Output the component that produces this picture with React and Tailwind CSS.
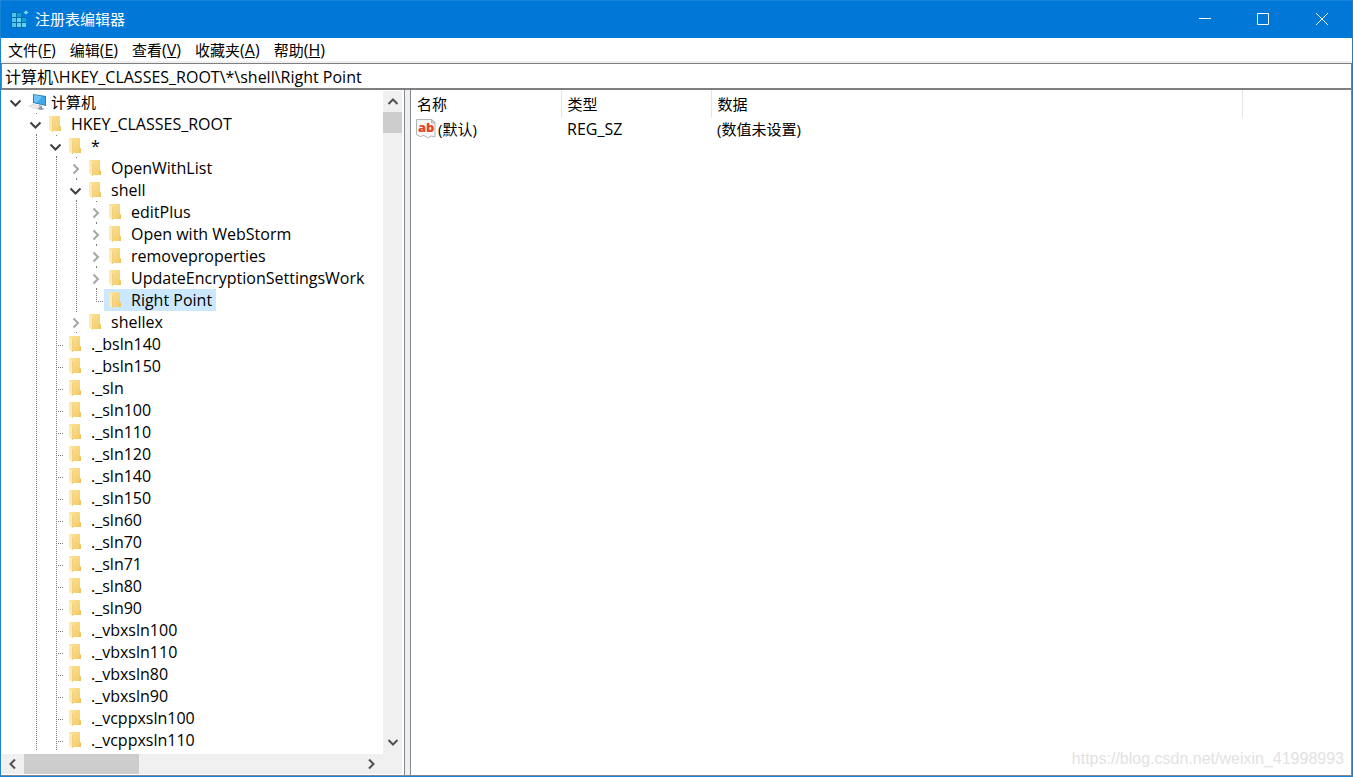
import clsx from 'clsx';

const CHILD_KEYS = [
  '._bsln140',
  '._bsln150',
  '._sln',
  '._sln100',
  '._sln110',
  '._sln120',
  '._sln140',
  '._sln150',
  '._sln60',
  '._sln70',
  '._sln71',
  '._sln80',
  '._sln90',
  '._vbxsln100',
  '._vbxsln110',
  '._vbxsln80',
  '._vbxsln90',
  '._vcppxsln100',
  '._vcppxsln110'
];

const ROWS = [
  { name: '计算机', depth: 0, state: 'open', computer: true },
  { name: 'HKEY_CLASSES_ROOT', depth: 1, state: 'open' },
  { name: '*', depth: 2, state: 'open' },
  { name: 'OpenWithList', depth: 3, state: 'closed' },
  { name: 'shell', depth: 3, state: 'open' },
  { name: 'editPlus', depth: 4, state: 'closed' },
  { name: 'Open with WebStorm', depth: 4, state: 'closed' },
  { name: 'removeproperties', depth: 4, state: 'closed' },
  { name: 'UpdateEncryptionSettingsWork', depth: 4, state: 'closed' },
  { name: 'Right Point', depth: 4, selected: true, last: true },
  { name: 'shellex', depth: 3, state: 'closed', last: true },
  ...CHILD_KEYS.map((name) => ({ name, depth: 2 }))
];

const MENUS = [
  ['文件', 'F'],
  ['编辑', 'E'],
  ['查看', 'V'],
  ['收藏夹', 'A'],
  ['帮助', 'H']
];

const RegeditIcon = () => (
  <svg width="18" height="18" viewBox="0 0 18 18" className="shrink-0">
    <path d="M0 2h10v5h5v11H0z" fill="#0a68ad" />
    <path d="M1 3h4v4H1zM1 8h4v4H1zM1 13h4v4H1z" fill="#52c6e8" />
    <path d="M6 8h4v4H6zM6 13h4v4H6zM11 13h4v4h-4z" fill="#63d3ee" />
    <path d="M6 3h4v4H6zM11 8h4v4h-4z" fill="#12a3d2" />
    <path d="M15 0l2.500 2.500L15 5l-2.500-2.500z" fill="#6fd4f0" stroke="#1f8fce" />
  </svg>
);

const ComputerIcon = () => (
  <svg width="20" height="18" viewBox="0 0 20 18" className="shrink-0">
    <path d="M5 1l13 2v10L5 10z" fill="#2f7fb8" />
    <path d="M6 2l11 2v8L6 9z" fill="#3fa9ec" />
    <path d="M6 2l8 1.500-5 6.200-3-.7z" fill="#6fc4f8" />
    <path d="M11 12l3 1v2l3 1-4 1-4-1 2-1z" fill="#8d979e" />
    <path d="M0 13l5-2 8 2.500-5 2.500z" fill="#cfd5d9" />
    <path d="M2 13l3-1 6 1.700-3 1.300z" fill="#eef0f2" />
  </svg>
);

const FolderIcon = () => (
  <svg width="12" height="16" viewBox="0 0 12 16" className="shrink-0">
    <defs>
      <linearGradient id="folder-body" x1="0" y1="0" x2="1" y2="1">
        <stop offset="0" stopColor="#fbe394" />
        <stop offset="1" stopColor="#f3cc67" />
      </linearGradient>
    </defs>
    <path d="M0 0h11v10l1 1v4H3z" fill="url(#folder-body)" />
    <path d="M10 11l1-1 1 1v4h-2z" fill="#efc660" />
    <path d="M0 0l4 2.500V16H3l-3-2.500z" fill="#fdebb3" />
    <path d="M3.500 3v13" stroke="#f0d080" />
  </svg>
);

const StringIcon = () => (
  <svg width="20" height="20" viewBox="0 0 20 20" className="shrink-0">
    <path d="M.5.5H16l3 3v14.500l-4-1-3 2-4-2.500-4 1-3.500-2z" fill="#f8f8f8" stroke="#b4b4b4" />
    <path d="M15.500.5v3.500H19z" fill="#dcdcdc" stroke="#b4b4b4" />
    <text x="2" y="13" className="font-['Open_Sans',sans-serif] text-[13px] font-extrabold" fill="#e0492b">
      ab
    </text>
  </svg>
);

const Chevron = ({ className, d }) => (
  <svg width="12" height="12" viewBox="0 0 12 12" fill="none" strokeWidth="2" className={className}>
    <path d={d} />
  </svg>
);

const UP = 'M1.500 8L6 3.500 10.500 8';
const DOWN = 'M1.500 4L6 8.500 10.500 4';
const LEFT = 'M8 1.500L3.500 6 8 10.500';
const RIGHT = 'M4 1.500L8.500 6 4 10.500';

// dotted line running through the row of every ancestor that has more siblings
const Guide = ({ visible }) => (
  <svg width="20" height="22" className="shrink-0" shapeRendering="crispEdges">
    {visible && <path d="M10.500 0v22" stroke="#7a7a7a" strokeDasharray="1 1" />}
  </svg>
);

const Branch = ({ row }) => {
  if (row.state) {
    const open = row.state === 'open';
    return (
      <button
        type="button"
        aria-label={open ? 'Collapse' : 'Expand'}
        className="flex h-[22px] w-[18px] shrink-0 items-center">
        <svg width="18" height="22" fill="none">
          {row.depth > 0 && <path d="M10 .5h1M10 21.500h1" stroke="#7a7a7a" />}
          <path
            d={open ? 'M4.500 9.500l5 5 5-5' : 'M7.500 7.500l4.500 4.500-4.500 4.500'}
            stroke={open ? '#404040' : '#a6a6a6'}
            strokeWidth="2"
          />
        </svg>
      </button>
    );
  }
  return (
    <svg width="18" height="22" className="shrink-0" fill="none" shapeRendering="crispEdges">
      <path
        d={row.last ? 'M10.500 0v12' : 'M10.500 0v22'}
        stroke="#7a7a7a"
        strokeDasharray="1 1"
      />
      <path d="M10 12.500h8" stroke="#7a7a7a" strokeDasharray="1 1" />
    </svg>
  );
};

const TreeRow = ({ row }) => (
  <li className="flex h-[22px] items-center">
    {Array.from({ length: row.depth }, (_, i) => (
      <Guide key={i} visible={i > 0} />
    ))}
    <Branch row={row} />
    <button
      type="button"
      className={clsx(
        'flex h-[22px] items-center whitespace-nowrap pr-1',
        row.computer ? 'gap-[3px] pl-1' : 'gap-2.5 pl-[5px] text-base leading-[22px]',
        row.selected && 'bg-[#cce8ff]'
      )}>
      {row.computer ? <ComputerIcon /> : <FolderIcon />}
      <span>{row.name}</span>
    </button>
  </li>
);

const TitleBar = () => (
  <header className="flex h-[38px] shrink-0 items-center justify-between border-t border-[#1883d7] bg-[#0078d7] pb-px text-white">
    <div className="flex items-center gap-1.5 pl-2.5">
      <RegeditIcon />
      <h1>注册表编辑器</h1>
    </div>
    <div className="flex h-full">
      <button type="button" aria-label="Minimize" className="flex w-[58px] items-center justify-center">
        <svg width="12" height="12" stroke="#fff">
          <path d="M0 5.500h12" />
        </svg>
      </button>
      <button type="button" aria-label="Maximize" className="flex w-[58px] items-center justify-center">
        <svg width="12" height="12" fill="none" stroke="#fff">
          <path d="M.5.5h11v11H.5z" />
        </svg>
      </button>
      <button type="button" aria-label="Close" className="flex w-[60px] items-center justify-center">
        <svg width="12" height="12" stroke="#fff">
          <path d="M0 0l12 12M12 0L0 12" />
        </svg>
      </button>
    </div>
  </header>
);

const MenuBar = () => (
  <nav className="flex h-[25px] shrink-0 items-center gap-3.5 border-b-2 border-[#f0f0f0] bg-white pl-[7px]">
    {MENUS.map(([label, key]) => (
      <button key={key} type="button">
        {label}
        <span className="text-base leading-[22px]">
          (<u>{key}</u>)
        </span>
      </button>
    ))}
  </nav>
);

const TreePane = () => (
  <aside className="flex w-[404px] shrink-0 flex-col border-r border-[#828790] bg-white p-px pr-0.5">
    <div className="flex min-h-0 flex-1">
      <ul className="min-w-0 flex-1 overflow-hidden pl-1">
        {ROWS.map((row) => (
          <TreeRow key={row.name} row={row} />
        ))}
      </ul>
      <div className="flex w-[19px] flex-col items-center bg-[#f0f0f0] pb-0.5">
        <button type="button" aria-label="Scroll up" className="flex h-[21px] items-center">
          <Chevron d={UP} className="stroke-[#505050]" />
        </button>
        <div className="h-[21px] w-full bg-[#cdcdcd]" />
        <button type="button" aria-label="Scroll down" className="mt-auto flex h-[21px] items-center">
          <Chevron d={DOWN} className="stroke-[#505050]" />
        </button>
      </div>
    </div>
    <div className="flex h-[20px] shrink-0 bg-[#f0f0f0] pr-[21px]">
      <button type="button" aria-label="Scroll left" className="flex w-[22px] items-center justify-center">
        <Chevron d={LEFT} className="stroke-[#505050]" />
      </button>
      <div className="h-full w-[115px] bg-[#cdcdcd]" />
      <button type="button" aria-label="Scroll right" className="ml-auto flex w-[21px] items-center justify-center">
        <Chevron d={RIGHT} className="stroke-[#505050]" />
      </button>
    </div>
  </aside>
);

const ValuePane = () => (
  <main className="relative min-w-0 flex-1 border-x border-[#828790] bg-white">
    <table className="w-[832px] table-fixed border-collapse text-left">
      <thead>
        <tr className="h-[27px]">
          <th className="w-[150px] border-r border-[#e5e5e5] pl-1.5 font-normal">名称</th>
          <th className="w-[150px] border-r border-[#e5e5e5] pl-1.5 font-normal">类型</th>
          <th className="border-r border-[#e5e5e5] pl-1.5 font-normal">数据</th>
        </tr>
      </thead>
      <tbody>
        <tr className="h-[24px]">
          <td className="pl-[5px]">
            <div className="flex items-center gap-0.5">
              <StringIcon />
              (默认)
            </div>
          </td>
          <td className="pl-1.5 text-base leading-[22px]">REG_SZ</td>
          <td className="pl-1.5">(数值未设置)</td>
        </tr>
      </tbody>
    </table>
    <p className="absolute right-[7px] bottom-1 font-['Liberation_Sans',sans-serif] text-base text-[#e2e2e2]">
      https://blog.csdn.net/weixin_41998993
    </p>
  </main>
);

const App = () => (
  <div className="flex h-screen flex-col border-x border-b border-[#1883d7] bg-[#f0f0f0] font-['Open_Sans','Noto_Sans_CJK_SC',sans-serif] text-[15px] leading-[22px] text-black">
    <TitleBar />
    <MenuBar />
    <input
      type="text"
      aria-label="Address"
      defaultValue="计算机\HKEY_CLASSES_ROOT\*\shell\Right Point"
      className="h-[27px] w-full shrink-0 border border-b-2 border-[#7f7f7f] bg-white pb-px pl-[3px] text-base leading-[22px] outline-none"
    />
    <div className="flex min-h-0 flex-1 gap-[5px] border-b border-[#828790]">
      <TreePane />
      <ValuePane />
    </div>
  </div>
);

export default App;
